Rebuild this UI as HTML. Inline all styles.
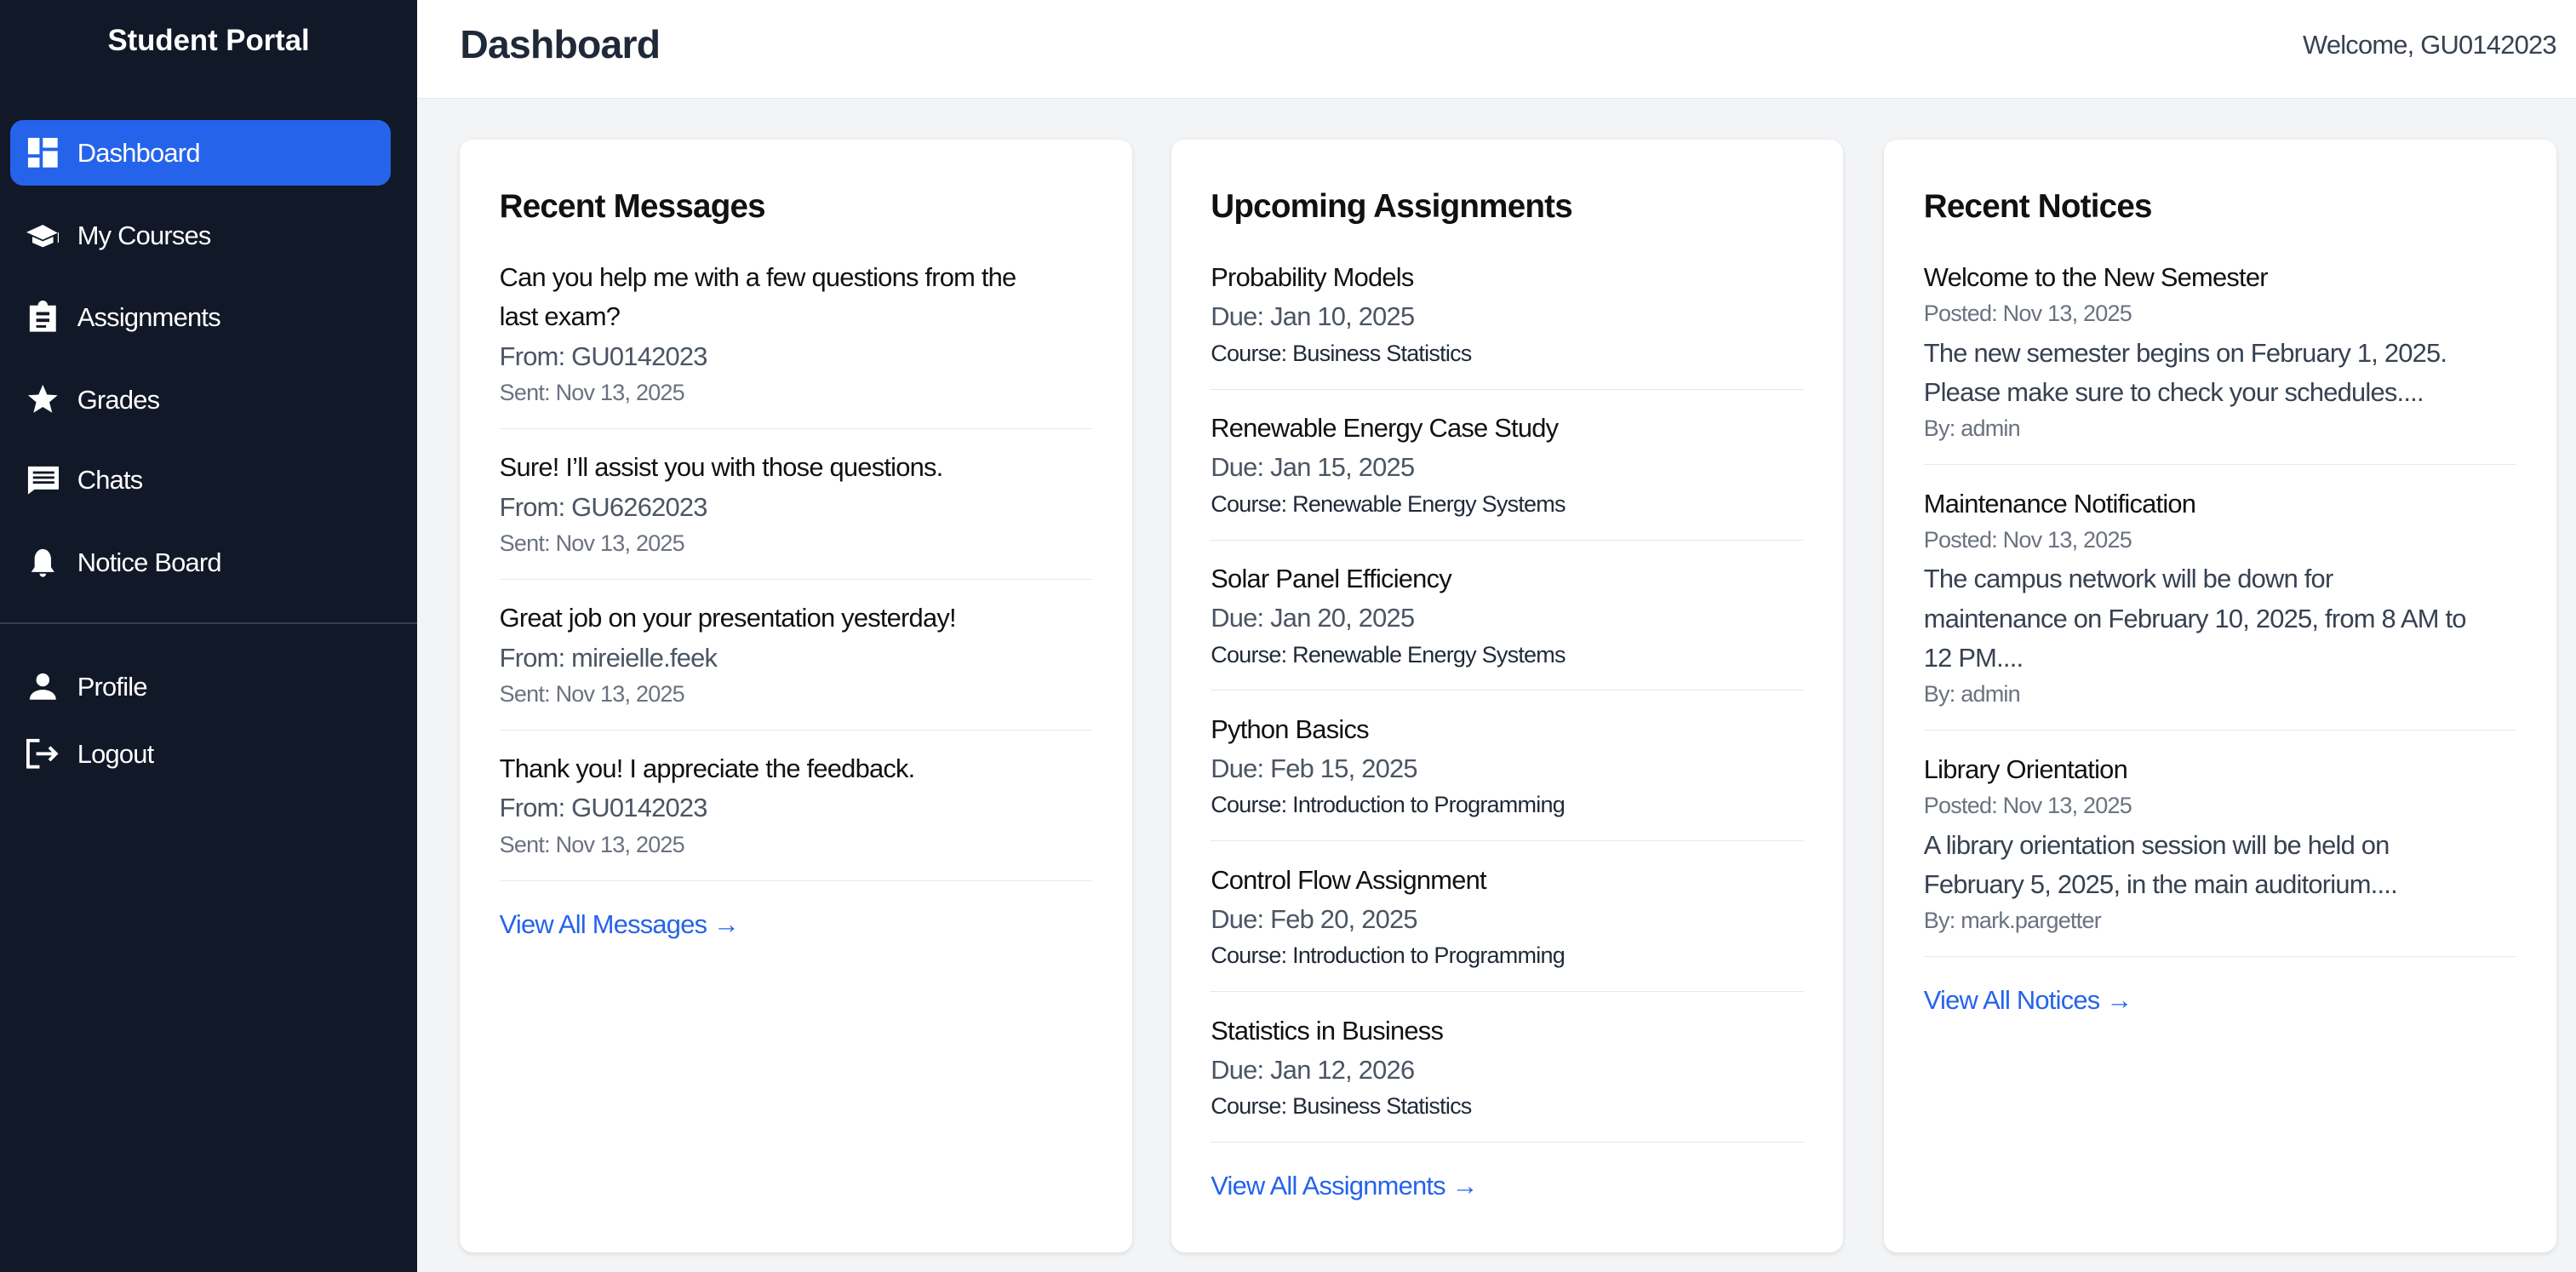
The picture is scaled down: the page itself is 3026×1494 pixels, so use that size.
<!DOCTYPE html>
<html><head><meta charset="utf-8"><style>
html{zoom:1.9298}
*{box-sizing:border-box;margin:0;padding:0}
body{width:1568px;height:774px;overflow:hidden;font-family:"Liberation Sans",sans-serif;background:#f3f4f6;position:relative;letter-spacing:-0.4px}
.side{position:absolute;left:0;top:0;width:254px;height:774px;background:#111827;color:#fff}
.brand{position:absolute;top:15px;left:0;width:254px;text-align:center;font-weight:bold;font-size:18px;letter-spacing:0}
.nav{position:absolute;left:6px;width:232px;height:40px;border-radius:8px;display:flex;align-items:center;font-size:16px;color:#fff}
.nav.act{background:#2563eb}
.nav svg{position:absolute;left:10px;width:20px;height:20px;fill:#fff}
.nav span{position:absolute;left:41px;top:11px}
.hr{position:absolute;left:0;top:379px;width:254px;height:1px;background:#374151}
.top{position:absolute;left:254px;top:0;right:0;height:60px;background:#fff;border-bottom:1px solid #e5e7eb}
.top h1{position:absolute;left:26px;top:13px;font-size:24px;color:#1f2937}
.top .w{position:absolute;right:12px;top:18px;font-size:16px;color:#374151}
.card{position:absolute;top:85px;width:409px;height:677px;background:#fff;border-radius:8px;box-shadow:0 1px 3px rgba(0,0,0,.1);padding:24px}
.card h2{font-size:20px;color:#111;margin-top:5px;height:35px;line-height:24px;margin-bottom:8px}
.it{border-bottom:1px solid #e5e7eb;padding:11.6px 0}
.it:first-of-type{padding-top:0}
.t{font-size:16px;line-height:24px;color:#111}
.g{font-size:16px;line-height:24px;color:#4b5563}
.s{font-size:14px;line-height:20px;color:#6b7280}
.c{font-size:14px;line-height:20px;color:#1f2937}
.b{font-size:16px;line-height:24px;color:#374151}
.lnk{font-size:16px;color:#2563eb;margin-top:17px}
</style></head><body>
<div class="side">
<div class="brand">Student Portal</div>
<div class="nav act" style="top:73px"><svg viewBox="0 0 20 20"><rect x="1" y="1" width="7" height="10"/><rect x="1" y="13" width="7" height="6"/><rect x="10" y="1" width="9" height="6"/><rect x="10" y="9" width="9" height="10"/></svg><span>Dashboard</span></div>
<div class="nav" style="top:123px"><svg viewBox="0 0 22 20"><path d="M11 3 0 8l11 5 11-5V15h-1V8.5zM4 11v4l7 3 7-3v-4l-7 3z"/></svg><span>My Courses</span></div>
<div class="nav" style="top:173px"><svg viewBox="0 0 20 20"><path d="M2 3h5a3 3 0 0 1 6 0h5v16H2zM6 7v2h8V7zm0 4v2h8v-2zm0 4v1.5h6V15z"/></svg><span>Assignments</span></div>
<div class="nav" style="top:223px"><svg viewBox="0 0 20 20"><path d="M10 1l2.6 6 6.4.4-5 4.2 1.7 6.4L10 14.5 4.3 18l1.7-6.4-5-4.2L7.4 7z"/></svg><span>Grades</span></div>
<div class="nav" style="top:272px"><svg viewBox="0 0 20 20"><path d="M1 2h19v14H5l-4 3zM4 5v1.5h13V5zm0 3v1.5h13V8zm0 3v1.5h13V11z"/></svg><span>Chats</span></div>
<div class="nav" style="top:322px"><svg viewBox="0 0 20 20"><path d="M10 2c-3 0-5 3-5 6v5l-2 3h14l-2-3V8c0-3-2-6-5-6zM8 17a2 2 0 0 0 4 0z"/></svg><span>Notice Board</span></div>
<div class="hr"></div>
<div class="nav" style="top:398px"><svg viewBox="0 0 20 20"><circle cx="10" cy="6" r="4"/><path d="M2 18c0-4 4-6 8-6s8 2 8 6z"/></svg><span>Profile</span></div>
<div class="nav" style="top:439px"><svg viewBox="0 0 20 20" style="fill:none;stroke:#fff;stroke-width:2"><path d="M8 2H1v16h7M6 10h12M14 6l4 4-4 4"/></svg><span>Logout</span></div>
</div>
<div class="top"><h1>Dashboard</h1><div class="w">Welcome, GU0142023</div></div>

<div class="card" style="left:280px">
<h2>Recent Messages</h2>
<div class="it"><div class="t">Can you help me with a few questions from the<br>last exam?</div><div class="g">From: GU0142023</div><div class="s">Sent: Nov 13, 2025</div></div>
<div class="it"><div class="t">Sure! I’ll assist you with those questions.</div><div class="g">From: GU6262023</div><div class="s">Sent: Nov 13, 2025</div></div>
<div class="it"><div class="t">Great job on your presentation yesterday!</div><div class="g">From: mireielle.feek</div><div class="s">Sent: Nov 13, 2025</div></div>
<div class="it"><div class="t">Thank you! I appreciate the feedback.</div><div class="g">From: GU0142023</div><div class="s">Sent: Nov 13, 2025</div></div>
<div class="lnk">View All Messages →</div>
</div>

<div class="card" style="left:713px">
<h2>Upcoming Assignments</h2>
<div class="it"><div class="t">Probability Models</div><div class="g">Due: Jan 10, 2025</div><div class="c">Course: Business Statistics</div></div>
<div class="it"><div class="t">Renewable Energy Case Study</div><div class="g">Due: Jan 15, 2025</div><div class="c">Course: Renewable Energy Systems</div></div>
<div class="it"><div class="t">Solar Panel Efficiency</div><div class="g">Due: Jan 20, 2025</div><div class="c">Course: Renewable Energy Systems</div></div>
<div class="it"><div class="t">Python Basics</div><div class="g">Due: Feb 15, 2025</div><div class="c">Course: Introduction to Programming</div></div>
<div class="it"><div class="t">Control Flow Assignment</div><div class="g">Due: Feb 20, 2025</div><div class="c">Course: Introduction to Programming</div></div>
<div class="it"><div class="t">Statistics in Business</div><div class="g">Due: Jan 12, 2026</div><div class="c">Course: Business Statistics</div></div>
<div class="lnk">View All Assignments →</div>
</div>

<div class="card" style="left:1147px">
<h2>Recent Notices</h2>
<div class="it"><div class="t">Welcome to the New Semester</div><div class="s">Posted: Nov 13, 2025</div><div class="b" style="margin-top:2px">The new semester begins on February 1, 2025.<br>Please make sure to check your schedules....</div><div class="s">By: admin</div></div>
<div class="it"><div class="t">Maintenance Notification</div><div class="s">Posted: Nov 13, 2025</div><div class="b" style="margin-top:2px">The campus network will be down for<br>maintenance on February 10, 2025, from 8 AM to<br>12 PM....</div><div class="s">By: admin</div></div>
<div class="it"><div class="t">Library Orientation</div><div class="s">Posted: Nov 13, 2025</div><div class="b" style="margin-top:2px">A library orientation session will be held on<br>February 5, 2025, in the main auditorium....</div><div class="s">By: mark.pargetter</div></div>
<div class="lnk">View All Notices →</div>
</div>
</body></html>
